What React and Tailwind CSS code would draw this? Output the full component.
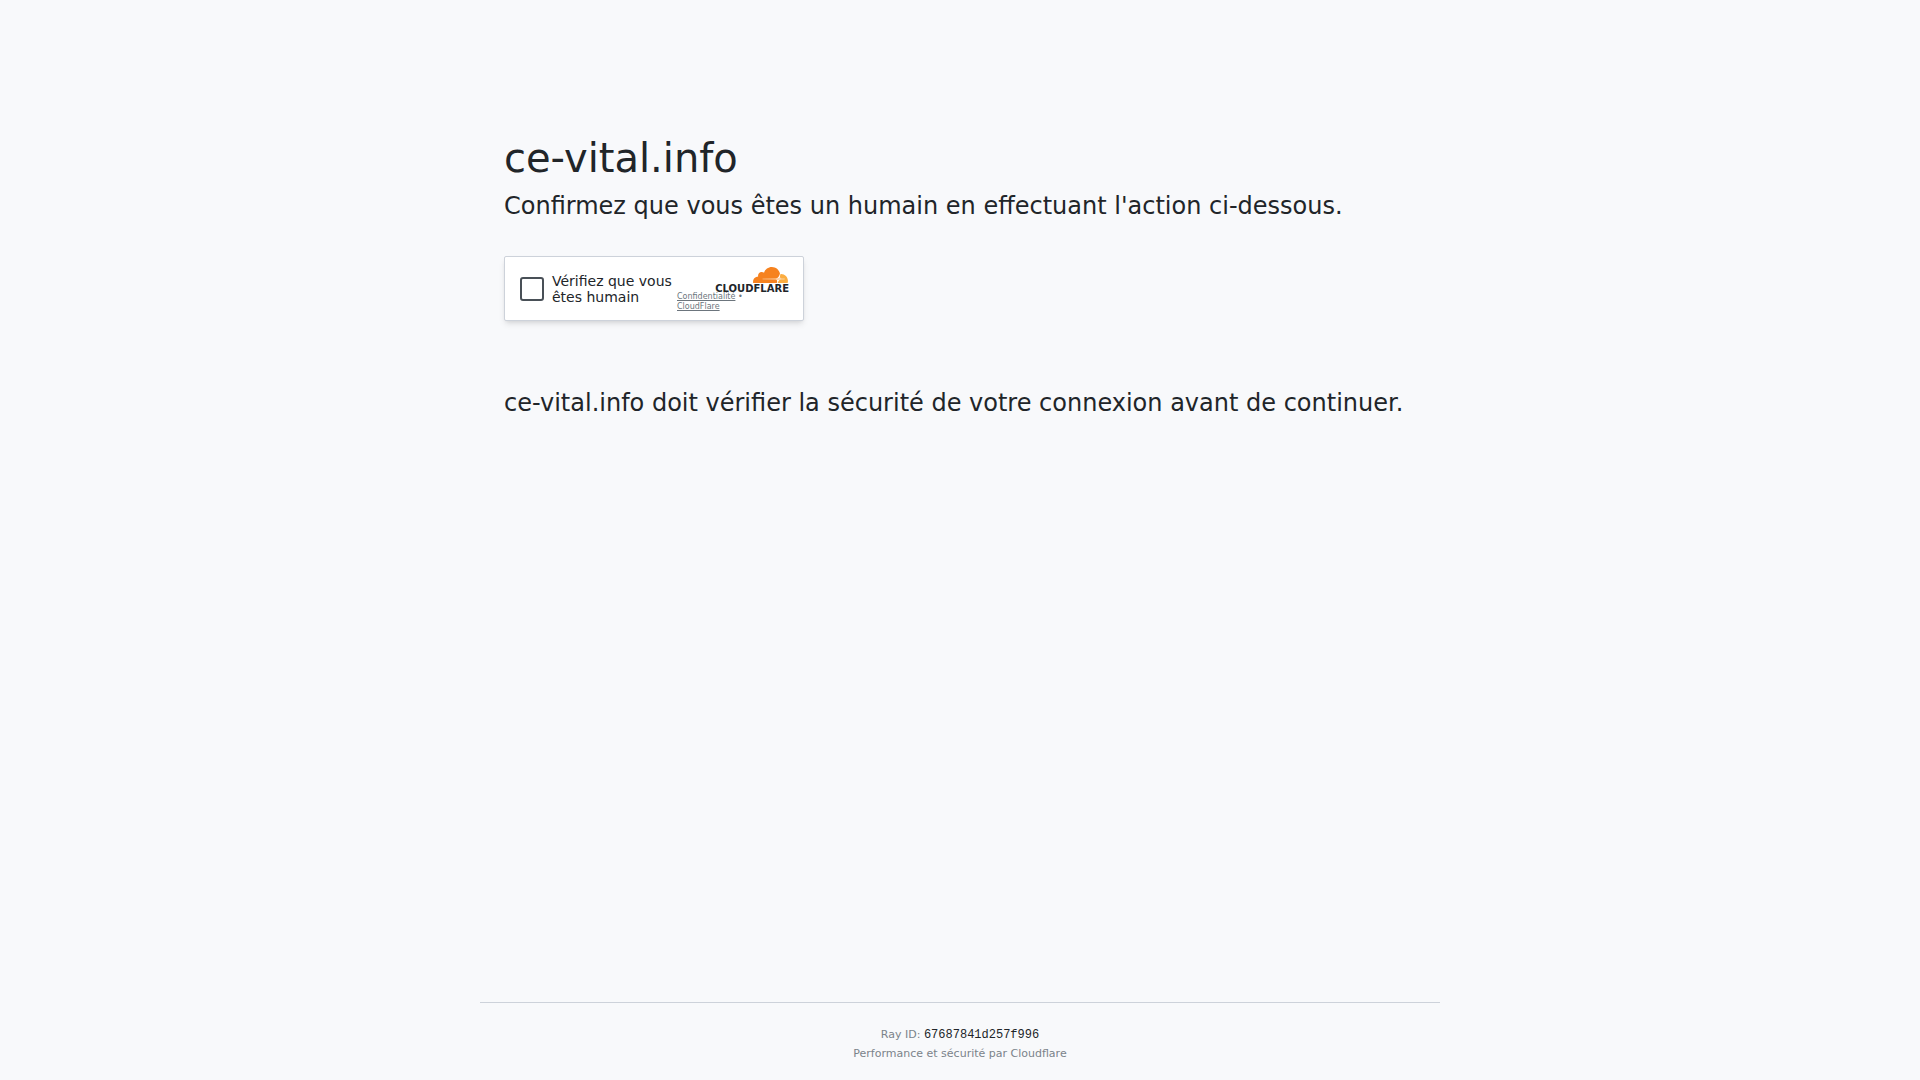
import React from "react"

const host = "ce-vital.info"
const rayId = "67687841d257f996"

const CloudflareLogo = () => {
  return (
    <div className="flex flex-col items-end">
      <svg viewBox="0 6.5 24 11" className="mr-px h-4 w-[35px]" aria-hidden="true">
        <path fill="#fcd3ab" d="M6 14.3h11l2-1 3 .7-4 1.5H6z" />
        <path
          fill="#f6821f"
          d="M16.5088 16.8447c.1475-.5068.0908-.9707-.1553-1.3154-.2246-.3164-.6045-.499-1.0615-.5205l-8.6592-.1123a.1559.1559 0 0 1-.1333-.0713c-.0283-.042-.0351-.0986-.021-.1553.0278-.084.1123-.1484.2036-.1562l8.7359-.1123c1.0351-.0489 2.1601-.8868 2.5537-1.9136l.499-1.3013c.0215-.0561.0293-.1128.0147-.168-.5625-2.5463-2.835-4.4453-5.5499-4.4453-2.5039 0-4.6284 1.6177-5.3876 3.8614-.4927-.3658-1.1187-.5625-1.794-.499-1.2026.119-2.1665 1.083-2.2861 2.2856-.0283.31-.0069.6128.0635.894C1.5683 13.171 0 14.7754 0 16.752c0 .1748.0142.3515.0352.5273.0141.083.0844.1475.1689.1475h15.9814c.0909 0 .1758-.0645.2032-.1553l.12-.4268z"
        />
        <path
          fill="#fbad41"
          d="M19.2656 11.2813c-.0771 0-.1611 0-.2383.0112-.0566 0-.1054.0415-.127.0976l-.3378 1.1744c-.1475.5068-.0918.9707.1543 1.3164.2256.3164.6055.498 1.0625.5195l1.8437.1133c.0557 0 .1055.0263.1329.0703.0283.043.0351.1074.0214.1562-.0283.084-.1132.1485-.204.1553l-1.921.1123c-1.041.0488-2.1582.8867-2.5527 1.914l-.1406.3585c-.0283.0713.0215.1416.0986.1416h6.5977c.0771 0 .1474-.0489.169-.126.1122-.4082.1757-.837.1757-1.2803 0-2.6025-2.125-4.727-4.7344-4.727z"
        />
      </svg>
      <span className="text-[10px] leading-3 font-bold">CLOUDFLARE</span>
    </div>
  )
}

const Challenge = () => {
  return (
    <div className="relative mt-8 flex h-[65px] w-[300px] items-center rounded-xs border border-[#cdd2da] bg-white pl-[15px] shadow-md">
      <input
        id="verify"
        type="checkbox"
        className="size-6 shrink-0 appearance-none rounded-[3px] border-2 border-[#495057] bg-white checked:bg-[#495057]"
      />
      <label htmlFor="verify" className="ml-2 w-[125px] text-sm leading-4">
        Vérifiez que vous êtes humain
      </label>
      <p className="mt-[26px] w-[72px] text-[8px] leading-[10px] text-[#6c757d]">
        <a href="#confidentialite" className="underline">
          Confidentialité
        </a>{" "}
        •{" "}
        <a href="#cloudflare" className="underline">
          CloudFlare
        </a>
      </p>
      <div className="pointer-events-none absolute top-[10px] right-[14px]">
        <CloudflareLogo />
      </div>
    </div>
  )
}

const App = () => {
  return (
    <div className="flex min-h-screen flex-col items-center bg-[#f8f9fb] font-['DejaVu_Sans',sans-serif] text-[#212529]">
      <main className="w-full max-w-[960px] grow px-6 pt-32">
        <h1 className="text-[40px] leading-[60px]">{host}</h1>
        <h2 className="text-2xl leading-9">
          Confirmez que vous êtes un humain en effectuant l'action ci-dessous.
        </h2>
        <Challenge />
        <p className="mt-16 text-2xl leading-9">
          {host} doit vérifier la sécurité de votre connexion avant de continuer.
        </p>
      </main>

      <footer className="w-full max-w-[960px] border-t border-[#cdd2da] pt-[22px] pb-[17px] text-center text-[11px] leading-[19px] text-[#7b838a]">
        <div>
          Ray ID:{" "}
          <code className="font-['Liberation_Mono',monospace] text-xs leading-[18px] text-[#212529]">
            {rayId}
          </code>
        </div>
        <div>Performance et sécurité par Cloudflare</div>
      </footer>
    </div>
  )
}

export default App
